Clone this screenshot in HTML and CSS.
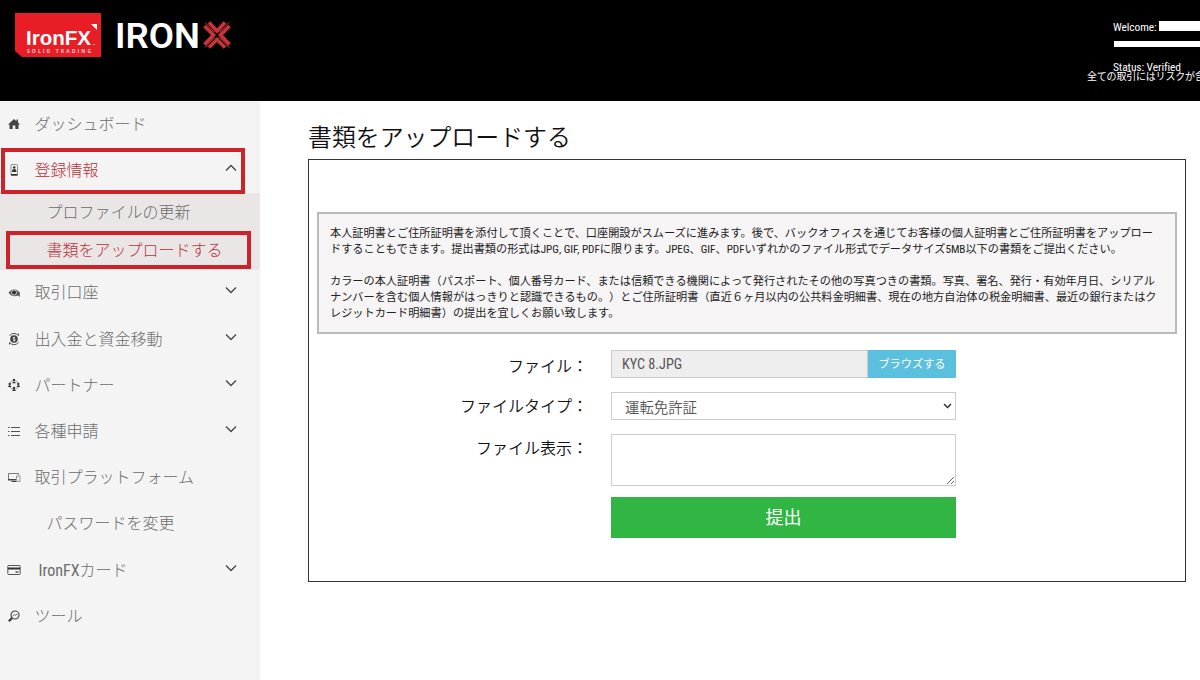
FILE: index.html
```
<!DOCTYPE html>
<html lang="ja">
<head>
    <meta charset="UTF-8">
    <meta name="viewport" content="width=device-width, initial-scale=1.0">
    <title>書類をアップロードする</title>
    <link rel="stylesheet" href="styles.css">
</head>
<body>
    <header class="header">
        <div class="logos">
            <svg class="logo-fx" width="88" height="46" viewBox="0 0 88 46">
                <path d="M1 1H87V45H8L1 39Z" fill="#e91d25"/>
                <path d="M77 12H83V18Z" fill="#fff"/>
                <text x="12" y="33" class="fx-name" textLength="65" lengthAdjust="spacingAndGlyphs">IronFX</text>
                <text x="13" y="40.500" class="fx-sub" textLength="64" lengthAdjust="spacing">SOLID TRADING</text>
                <rect x="79" y="32" width="2" height="1" fill="#f9b5b7"/>
            </svg>
            <svg class="logo-x" width="118" height="36" viewBox="0 0 118 36">
                <text x="-1" y="28.500" class="ironx-name" textLength="85" lengthAdjust="spacingAndGlyphs">IRON</text>
                <g stroke="#c9333a" stroke-width="3.600" fill="none">
                    <path d="M88.500 7L97.500 16L88.500 25.500M93 3.500L101 12L109 3.500M113.500 7L104.500 16L113.500 25.500M93 28.500L101 20.500L109 28.500"/>
                    <path d="M89 3.500L98.500 13.500M113 3.500L103.500 13.500M89 28.500L98.500 18.500M113 28.500L103.500 18.500" stroke-width="1"/>
                </g>
            </svg>
        </div>
        <div class="user">
            <div class="user-row"><span class="cond">Welcome:</span><span class="mask"></span></div>
            <div class="mask-line"></div>
            <div class="user-row status"><span class="cond">Status: Verified</span></div>
            <div class="risk">全ての取引にはリスクが含まれます</div>
        </div>
    </header>

    <div class="page">
        <nav class="sidebar">
            <a class="item">
                <svg class="icon" viewBox="0 0 14 14"><path d="M1 7.500L7 2L9.500 4.200V2.500H11V5.500L13 7.500H11.500V12H8.300V8.500H5.700V12H2.500V7.500Z" fill="#444"/></svg>
                <span>ダッシュボード</span>
            </a>
            <a class="item active">
                <svg class="icon" viewBox="0 0 14 14"><rect x="4" y="1.500" width="6.500" height="11" rx="1" fill="#f4f4f4" stroke="#777" stroke-width=".8"/><path d="M4 11H10.500V12.500H4Z" fill="#333"/><circle cx="7.200" cy="4.500" r="1.300" fill="#333"/><path d="M5 9Q5 6 7.200 6Q9.500 6 9.500 9Z" fill="#333"/></svg>
                <span>登録情報</span>
                <svg class="arrow" viewBox="0 0 12 8"><path d="M1 6.500L6 1.500L11 6.500"/></svg>
                <i class="mark mark-menu"></i>
            </a>
            <div class="sub">
                <a class="subitem">プロファイルの更新</a>
                <a class="subitem active">書類をアップロードする<i class="mark mark-sub"></i></a>
            </div>
            <a class="item">
                <svg class="icon" viewBox="0 0 14 14"><path d="M1.500 7.500Q7 1 12.800 7.500V12L11 10.500Q5 13 1.500 7.500Z" fill="#555"/><circle cx="7" cy="7.500" r="2.600" fill="#333" stroke="#ddd" stroke-width=".9"/></svg>
                <span>取引口座</span>
                <svg class="arrow" viewBox="0 0 12 8"><path d="M1 1.500L6 6.500L11 1.500"/></svg>
            </a>
            <a class="item">
                <svg class="icon" viewBox="0 0 14 14"><circle cx="7" cy="7" r="3.800" fill="#444"/><path d="M8.200 5.500H6.300V7H8V8.700H6M7 4.800V9.500" fill="none" stroke="#eee" stroke-width=".7"/><path d="M2.500 3.500Q7-.7 11.500 3.500V1.500M11.500 10.500Q7 15 2.500 10.500V12.500" fill="none" stroke="#555"/></svg>
                <span>出入金と資金移動</span>
                <svg class="arrow" viewBox="0 0 12 8"><path d="M1 1.500L6 6.500L11 1.500"/></svg>
            </a>
            <a class="item">
                <svg class="icon" viewBox="0 0 14 14"><circle cx="7" cy="7" r="4.500" fill="none" stroke="#888" stroke-width=".8"/><g fill="#333"><circle cx="7" cy="2" r="1.200"/><path d="M5 5.300Q7 1.700 9 5.300ZM.7 9Q2.700 5.300 4.600 9ZM9.400 9Q11.300 5.300 13.300 9ZM5 13Q7 9.300 9 13Z"/><circle cx="2.700" cy="6" r="1.200"/><circle cx="11.300" cy="6" r="1.200"/><circle cx="7" cy="10" r="1.200"/></g></svg>
                <span>パートナー</span>
                <svg class="arrow" viewBox="0 0 12 8"><path d="M1 1.500L6 6.500L11 1.500"/></svg>
            </a>
            <a class="item">
                <svg class="icon" viewBox="0 0 14 14"><path d="M1 3.500H2.500M4 3.500H13M1 7.500H2.500M4 7.500H13M1 11.500H2.500M4 11.500H13" stroke="#555"/></svg>
                <span>各種申請</span>
                <svg class="arrow" viewBox="0 0 12 8"><path d="M1 1.500L6 6.500L11 1.500"/></svg>
            </a>
            <a class="item">
                <svg class="icon" viewBox="0 0 14 14"><path d="M9 9.500H1.500V3.500H11.500V5" fill="none" stroke="#777"/><path d="M1 9H9V10.500H1ZM4.500 11H9V12H4.500Z" fill="#444"/><rect x="9.500" y="6" width="3.500" height="5.500" fill="#eee" stroke="#888" stroke-width=".8"/></svg>
                <span>取引プラットフォーム</span>
            </a>
            <a class="item nested"><span>パスワードを変更</span></a>
            <a class="item">
                <svg class="icon" viewBox="0 0 14 14"><rect x=".8" y="2.500" width="12.400" height="9" rx=".8" fill="#f4f4f4" stroke="#555"/><path d="M1 4.500H13V6.500H1Z" fill="#333"/><path d="M8.500 9H11.500" stroke="#444" stroke-width="1.300"/></svg>
                <span class="card-text"><span class="cond">IronFX</span>カード</span>
                <svg class="arrow" viewBox="0 0 12 8"><path d="M1 1.500L6 6.500L11 1.500"/></svg>
            </a>
            <a class="item">
                <svg class="icon" viewBox="0 0 14 14"><circle cx="8" cy="6" r="4" fill="none" stroke="#444" stroke-width="1.200"/><path d="M5 9L1.800 12.200" stroke="#333" stroke-width="2"/><path d="M5.800 7L7.500 5.500L8.500 6.300L10.300 5" fill="none" stroke="#444" stroke-width=".9"/></svg>
                <span>ツール</span>
            </a>
        </nav>

        <main class="content">
            <h1>書類をアップロードする</h1>
            <section class="panel">
                <div class="notice">
                    <p>本人証明書とご住所証明書を添付して頂くことで、口座開設がスムーズに進みます。後で、バックオフィスを通じてお客様の個人証明書とご住所証明書をアップロー<br>ドすることもできます。提出書類の形式は<span class="cond">JPG, GIF, PDF</span>に限ります。<span class="cond">JPEG</span>、<span class="cond">GIF</span>、<span class="cond">PDF</span>いずれかのファイル形式でデータサイズ<span class="cond">5MB</span>以下の書類をご提出ください。</p>
                    <p>カラーの本人証明書（パスポート、個人番号カード、または信頼できる機関によって発行されたその他の写真つきの書類。写真、署名、発行・有効年月日、シリアル<br>ナンバーを含む個人情報がはっきりと認識できるもの。）とご住所証明書（直近６ヶ月以内の公共料金明細書、現在の地方自治体の税金明細書、最近の銀行またはク<br>レジットカード明細書）の提出を宜しくお願い致します。</p>
                </div>
                <form class="form">
                    <label>ファイル：</label>
                    <div class="file">
                        <div class="file-name"><span class="cond">KYC 8.JPG</span></div>
                        <button type="button" class="browse">ブラウズする</button>
                    </div>
                    <label>ファイルタイプ：</label>
                    <div class="select">
                        <span>運転免許証</span>
                        <svg width="9" height="6" viewBox="0 0 9 6"><path d="M1 1L4.500 4.500L8 1" fill="none" stroke="#333" stroke-width="1.500"/></svg>
                    </div>
                    <label>ファイル表示：</label>
                    <textarea></textarea>
                    <button type="button" class="submit">提出</button>
                </form>
            </section>
        </main>
    </div>
</body>
</html>
```
FILE: styles.css
```
* {
    box-sizing: border-box;
}
body {
    margin: 0;
    height: 680px;
    overflow: hidden;
    background: #fff;
    color: #222;
    font-family: 'Noto Sans CJK JP', sans-serif;
    font-weight: 350;
}
.cond {
    font-family: 'Roboto Condensed', Roboto, sans-serif;
    font-stretch: 75%;
    font-weight: 400;
}
.header {
    display: flex;
    justify-content: space-between;
    height: 101px;
    background: #000;
    color: #fff;
    overflow: hidden;
}
.logos {
    display: flex;
    align-items: flex-start;
    gap: 14px;
    padding: 12px 0 0 14px;
}
.logo-x {
    margin-top: 7px;
    overflow: visible;
}
.fx-name {
    font: bold 21px 'Liberation Sans', sans-serif;
    fill: #fff;
}
.fx-sub {
    font: bold 5px 'Open Sans', sans-serif;
    fill: #fbd5d6;
}
.ironx-name {
    font: 600 35.5px Roboto, sans-serif;
    fill: #fff;
}
.user {
    width: 113px;
    padding-top: 20px;
    font-size: 11.5px;
    white-space: nowrap;
}
.user-row {
    display: flex;
    gap: 2px;
    height: 14px;
    padding-left: 26px;
    line-height: 14px;
    letter-spacing: -.1px;
}
.mask {
    flex: 1;
    height: 10px;
    margin-top: 1px;
    background: #fff;
}
.mask-line {
    height: 6px;
    margin: 7px 0 0 27px;
    background: #fff;
}
.status {
    margin-top: 13px;
}
.risk {
    margin-top: -5px;
    font-size: 10px;
    font-weight: 400;
    line-height: 14px;
    letter-spacing: -.2px;
}
.page {
    display: flex;
    height: 579px;
}
.sidebar {
    width: 260px;
    background: #f4f4f4;
    color: #6c6c6c;
    font-size: 16px;
    font-weight: 300;
}
.item {
    position: relative;
    display: flex;
    align-items: center;
    height: 46.2px;
    padding: 0 23px 0 6.5px;
}
.item > span {
    margin-top: -2px;
}
.icon {
    width: 14px;
    height: 14px;
    margin-right: 14px;
}
.arrow {
    width: 12px;
    height: 8px;
    margin: 0 0 4px auto;
    fill: none;
    stroke: #444;
    stroke-width: 1.3;
}
.active {
    color: #b9323b;
}
.item.nested {
    padding-left: 46.5px;
}
.card-text {
    padding-left: 4px;
}
.sub {
    padding-bottom: 1px;
    margin-bottom: -1px;
    background: #ebe6e6;
}
.subitem {
    position: relative;
    display: block;
    height: 38px;
    padding-left: 46.5px;
    line-height: 37px;
}
.mark {
    position: absolute;
    border: 4px solid #cc2229;
}
.mark-menu {
    left: 1px;
    top: 1px;
    width: 244px;
    height: 46px;
}
.mark-sub {
    left: 6px;
    top: 0;
    width: 245px;
    height: 38px;
}
.content {
    flex: 1;
    padding: 14px 14px 0 48px;
}
h1 {
    margin: 0 0 3px;
    color: #111;
    font-size: 23.9px;
    font-weight: 350;
    line-height: 41px;
}
.panel {
    height: 423px;
    padding: 52px 8px 0;
    border: 1px solid #333;
}
.notice {
    height: 122px;
    padding: 11px 11px 0;
    border: 2px solid #b9bbbb;
    background: #f6f4f5;
    font-size: 11.18px;
    font-weight: 400;
    line-height: 15.8px;
    white-space: nowrap;
    text-spacing-trim: space-all;
}
.notice p {
    margin: 0 0 15.5px;
}
.form {
    display: grid;
    grid-template-columns: 272px 345px;
    grid-template-rows: 28px 28px 52px 41px;
    column-gap: 22px;
    row-gap: 14px;
    padding-top: 16px;
    font-size: 16px;
}
.form label {
    height: 28px;
    padding-right: 1px;
    color: #111;
    text-align: right;
    line-height: 27px;
    white-space: nowrap;
}
.form label:first-child {
    line-height: 31px;
}
.file {
    display: flex;
}
.file-name {
    flex: 1;
    padding-left: 10px;
    border: 1px solid #ccc;
    background: #eee;
    color: #555;
    font-size: 14.2px;
    line-height: 25px;
}
.browse {
    width: 88px;
    padding: 0 0 3px;
    border: 0;
    background: #5bc0de;
    color: #fff;
    font: 400 11.2px 'Noto Sans CJK JP', sans-serif;
}
.select {
    display: flex;
    align-items: center;
    justify-content: space-between;
    padding: 0 3px 0 13px;
    border: 1px solid #ccc;
    color: #555;
    font-size: 14.4px;
}
.select span {
    height: 18px;
    line-height: 20px;
    overflow: hidden;
}
textarea {
    width: 345px;
    height: 52px;
    border: 1px solid #ccc;
    background: #fff;
}
.submit {
    grid-column: 2;
    margin-top: -3px;
    padding: 0 0 4px;
    height: 41px;
    border: 0;
    background: #32b643;
    color: #fff;
    font: 400 18px 'Noto Sans CJK JP', sans-serif;
}
```
